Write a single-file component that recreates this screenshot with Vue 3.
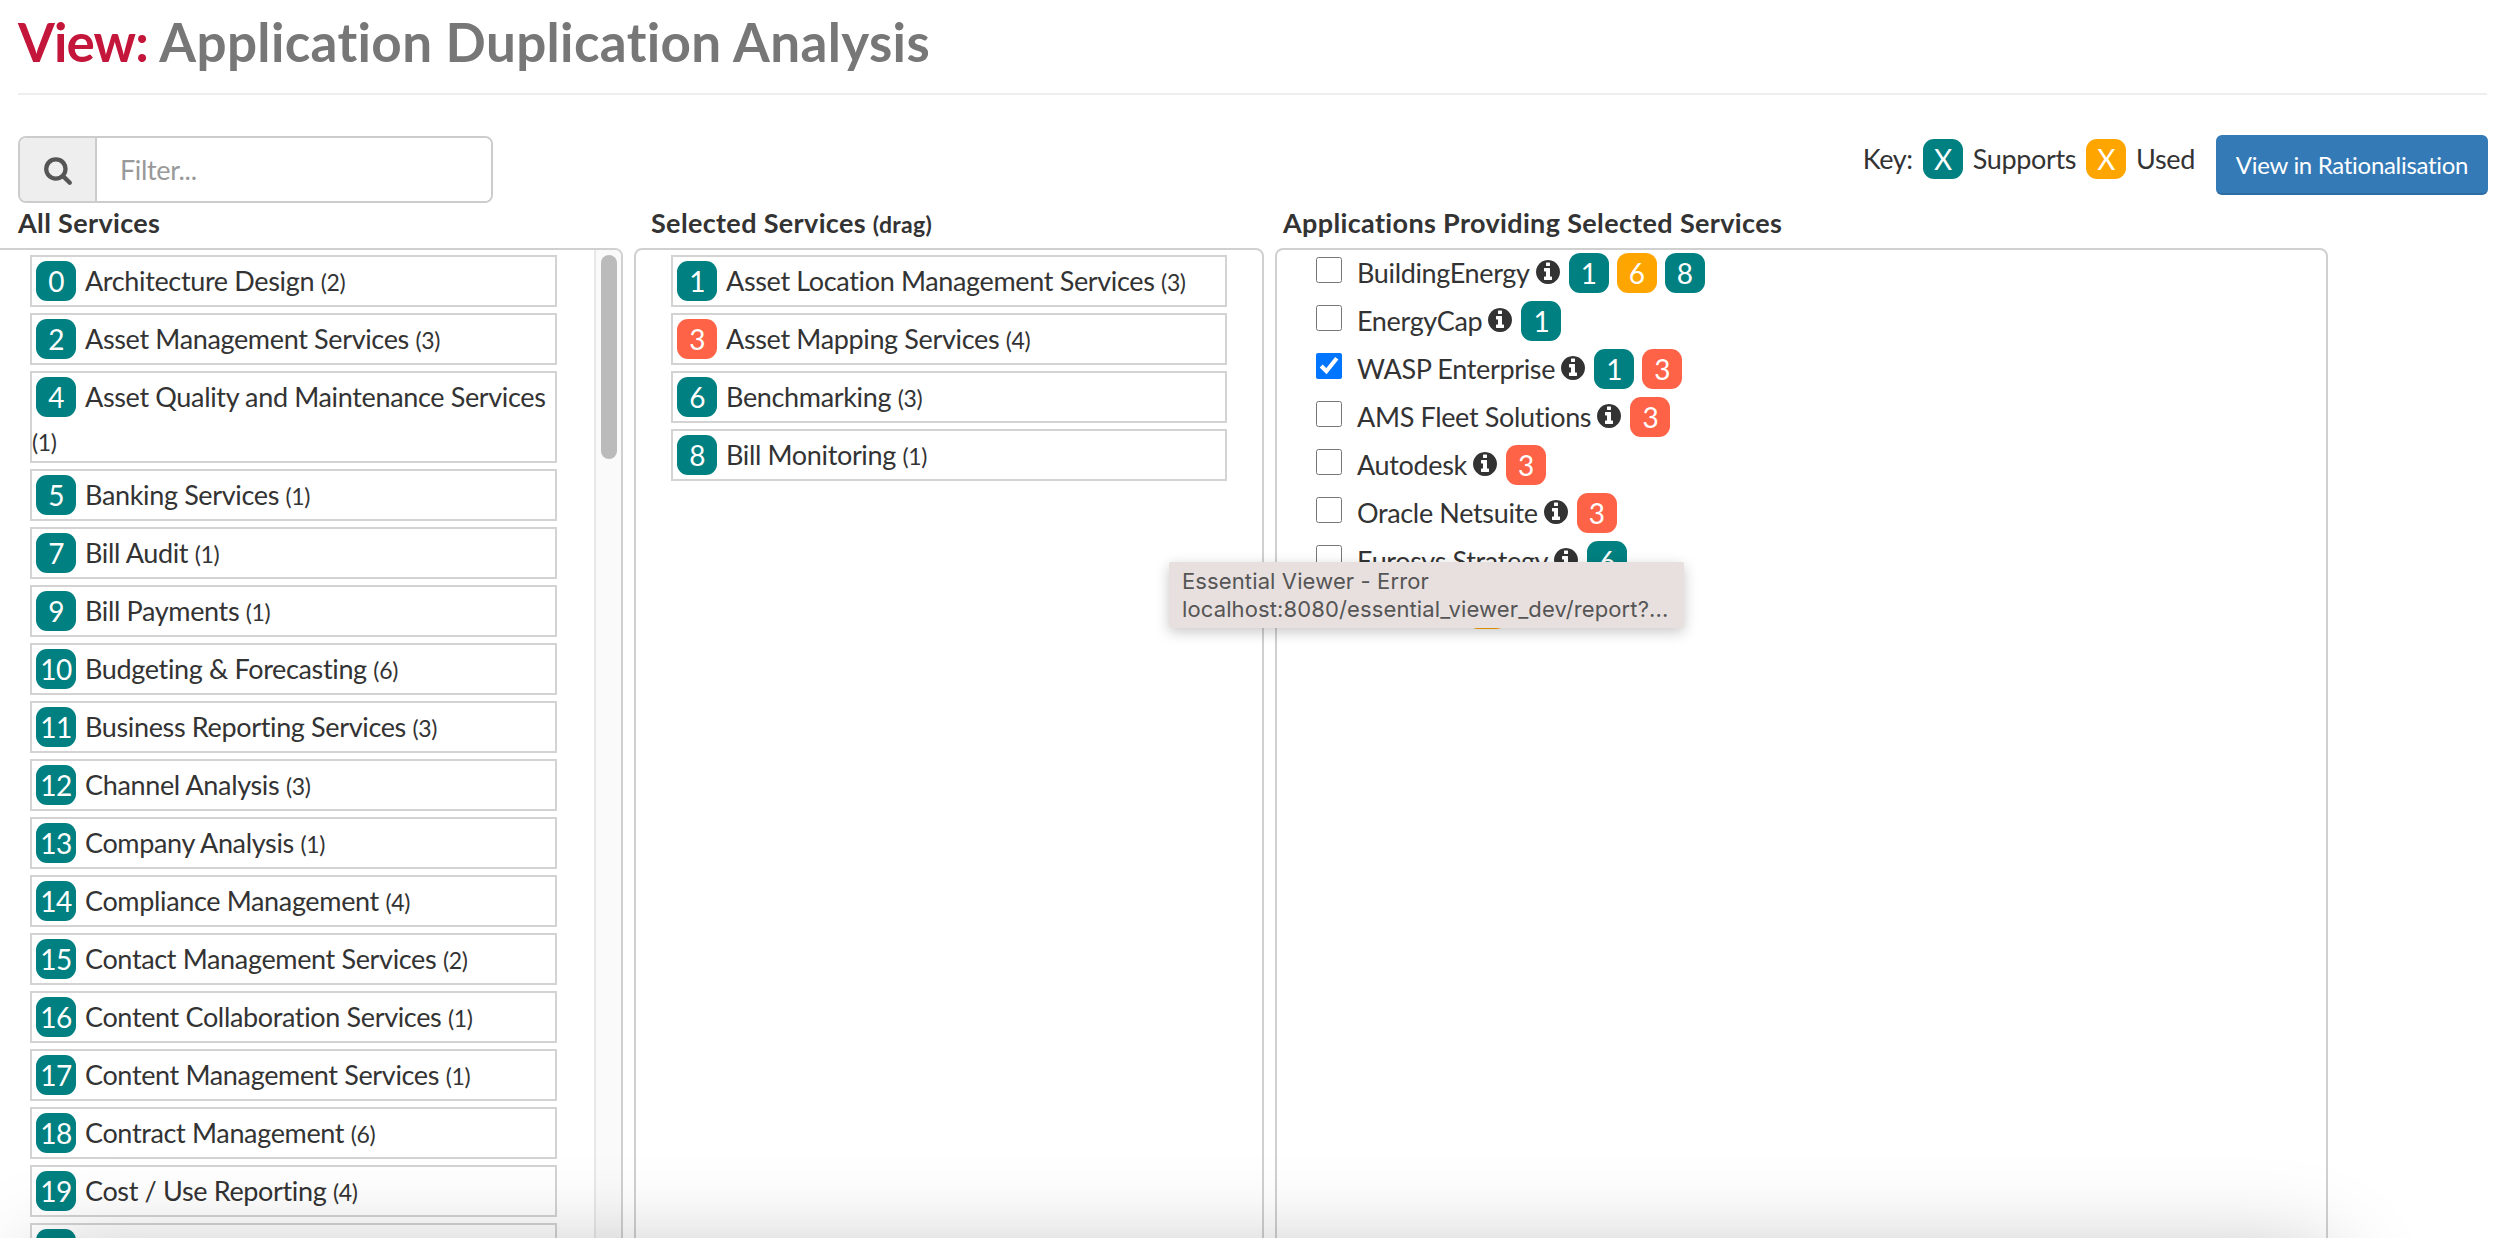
<script setup>
const services = [
  ['0', 'Architecture Design', 2], ['2', 'Asset Management Services', 3], ['4', 'Asset Quality and Maintenance Services', 1],
  ['5', 'Banking Services', 1], ['7', 'Bill Audit', 1], ['9', 'Bill Payments', 1], ['10', 'Budgeting & Forecasting', 6],
  ['11', 'Business Reporting Services', 3], ['12', 'Channel Analysis', 3], ['13', 'Company Analysis', 1],
  ['14', 'Compliance Management', 4], ['15', 'Contact Management Services', 2], ['16', 'Content Collaboration Services', 1],
  ['17', 'Content Management Services', 1], ['18', 'Contract Management', 6], ['19', 'Cost / Use Reporting', 4]
]
const selected = [
  ['1', 'Asset Location Management Services', 3, 'teal'], ['3', 'Asset Mapping Services', 4, 'tomato'],
  ['6', 'Benchmarking', 3, 'teal'], ['8', 'Bill Monitoring', 1, 'teal']
]
const apps = [
  { name: 'BuildingEnergy', badges: [['1', 'teal'], ['6', 'orange'], ['8', 'teal']] },
  { name: 'EnergyCap', badges: [['1', 'teal']] },
  { name: 'WASP Enterprise', checked: true, badges: [['1', 'teal'], ['3', 'tomato']] },
  { name: 'AMS Fleet Solutions', badges: [['3', 'tomato']] },
  { name: 'Autodesk', badges: [['3', 'tomato']] },
  { name: 'Oracle Netsuite', badges: [['3', 'tomato']] },
  { name: 'Eurosys Strategy', badges: [['6', 'teal']] },
  { name: '', badges: [['', 'orange']] }
]
const infoPath = 'M1152 1376v-160q0-14-9-23t-23-9h-96v-512q0-14-9-23t-23-9h-320q-14 0-23 9t-9 23v160q0 14 9 23t23 9h96v320h-96q-14 0-23 9t-9 23v160q0 14 9 23t23 9h448q14 0 23-9t9-23zm-128-896v-160q0-14-9-23t-23-9h-192q-14 0-23 9t-9 23v160q0 14 9 23t23 9h192q14 0 23-9t9-23zm640 416q0 209-103 385.5t-279.5 279.5-385.5 103-385.5-103-279.5-279.5-103-385.5 103-385.5 279.5-279.5 385.5-103 385.5 103 279.5 279.5 103 385.5z'
</script>

<template>
  <div class="page">
    <h1 class="title"><span class="view">View:</span> Application Duplication Analysis</h1>
    <div class="rule"></div>

    <div class="toolbar">
      <div class="filter">
        <span class="addon">
          <svg viewBox="0 0 1792 1792" width="30" height="30" fill="#555"><path d="M1216 832q0-185-131.5-316.5t-316.5-131.5-316.5 131.5-131.5 316.5 131.5 316.5 316.5 131.5 316.5-131.5 131.5-316.5zm512 832q0 52-38 90t-90 38q-54 0-90-38l-343-342q-179 124-399 124-143 0-273.5-55.5t-225-150-150-225-55.5-273.5 55.5-273.5 150-225 225-150 273.5-55.5 273.5 55.5 225 150 150 225 55.5 273.5q0 220-124 399l343 343q37 37 37 90z"/></svg>
        </span>
        <input class="filter-input" placeholder="Filter..." />
      </div>
      <div class="key">
        <span class="key-label">Key:</span>
        <span class="badge teal">X</span>
        <span class="key-label">Supports</span>
        <span class="badge orange">X</span>
        <span class="key-label">Used</span>
        <button class="btn">View in Rationalisation</button>
      </div>
    </div>

    <div class="columns">
      <section>
        <h2 class="head head-all">All Services</h2>
        <div class="panel panel-all">
          <div class="list list-all">
            <div v-for="s in services" :key="s[0]" class="row">
              <span class="badge teal inline">{{ s[0] }}</span>{{ s[1] }} <small>({{ s[2] }})</small>
            </div>
            <div class="row"><span class="badge teal inline"></span></div>
          </div>
          <div class="track"><div class="thumb"></div></div>
        </div>
      </section>

      <section>
        <h2 class="head head-sel">Selected Services <small>(drag)</small></h2>
        <div class="panel">
          <div class="list list-sel">
            <div v-for="s in selected" :key="s[0]" class="row">
              <span class="badge inline" :class="s[3]">{{ s[0] }}</span>{{ s[1] }} <small>({{ s[2] }})</small>
            </div>
          </div>
        </div>
      </section>

      <section>
        <h2 class="head head-app">Applications Providing Selected Services</h2>
        <div class="panel">
          <div class="apps">
            <div v-for="(a, idx) in apps" :key="idx" class="app">
              <input type="checkbox" class="check" :checked="a.checked" />
              <span class="app-name" :class="{ 'name-covered': !a.name }">{{ a.name }}</span>
              <svg class="info" viewBox="128 128 1536 1536" width="24" height="24" fill="#333"><path :d="infoPath"/></svg>
              <span class="badges">
                <span v-for="(b, i) in a.badges" :key="i" class="badge" :class="b[1]">{{ b[0] }}</span>
              </span>
            </div>
          </div>
        </div>
      </section>
    </div>

    <div class="tooltip">
      <div>Essential Viewer - Error</div>
      <div>localhost:8080/essential_viewer_dev/report?...</div>
    </div>
    <div class="window-shadow"></div>
  </div>
</template>

<style>
html, body { margin: 0; background: #fff; }
</style>

<style scoped>
.page {
  position: relative;
  width: 2516px;
  height: 1238px;
  overflow: hidden;
  background: #fff;
  font-family: Lato, "Noto Sans", sans-serif;
  font-size: 27px;
  letter-spacing: -0.35px;
  line-height: 40px;
  color: #333;
}
.title {
  margin: 0 0 0 18px;
  height: 93px;
  font-size: 53px;
  line-height: 84px;
  font-weight: 700;
  letter-spacing: 0.35px;
  color: #777;
}
.view { color: #c3163a; letter-spacing: -0.9px; }
.rule {
  height: 2px;
  margin: 0 29px 0 18px;
  background: #eee;
}
.toolbar {
  display: flex;
  justify-content: space-between;
  align-items: flex-start;
  height: 72px;
  margin: 41px 28px 0 18px;
}
.filter {
  display: flex;
  width: 475px;
  height: 67px;
  box-sizing: border-box;
  border: 2px solid #ccc;
  border-radius: 8px;
  overflow: hidden;
}
.addon {
  display: flex;
  align-items: center;
  justify-content: center;
  width: 75px;
  flex: none;
  background: #eee;
  border-right: 2px solid #ccc;
}
.filter-input {
  flex: 1;
  min-width: 0;
  border: 0;
  outline: 0;
  padding: 0 23px;
  font: inherit;
  letter-spacing: inherit;
  color: #333;
}
.filter-input::placeholder { color: #999; opacity: 1; }
.key {
  display: flex;
  align-items: flex-start;
  margin-top: -1px;
}
.key-label { margin: 4px 10px 0; }
.key .badge { margin-top: 4px; }
.btn {
  width: 272px;
  height: 60px;
  margin-left: 11px;
  padding: 0;
  border: 0;
  border-bottom: 2px solid #2e6da4;
  border-radius: 6px;
  background: #337ab7;
  color: #fff;
  font-family: inherit;
  font-size: 24px;
  letter-spacing: -0.3px;
}
.columns {
  display: grid;
  grid-template-columns: 623px 630px 1053px;
  column-gap: 11px;
  margin-top: -7px;
}
.head {
  margin: 0;
  height: 47px;
  font-size: 27px;
  font-weight: 700;
  line-height: 44px;
  letter-spacing: 0.35px;
  color: #333;
}
.head small { font-size: 23px; }
.head-all { margin-left: 18px; }
.head-sel { margin-left: 17px; }
.head-app { margin-left: 8px; }
.panel {
  display: flex;
  height: 1100px;
  box-sizing: border-box;
  border: 2px solid #d0d0d0;
  border-radius: 8px;
}
.panel-all { margin-left: -10px; }
.list { display: flex; flex-direction: column; gap: 6px; padding-top: 5px; }
.list-all { width: 527px; padding-left: 38px; flex: none; }
.list-sel { width: 556px; padding-left: 35px; }
.track {
  width: 27px;
  margin-left: 37px;
  flex: none;
  box-sizing: border-box;
  padding: 5px 3px 0 5px;
  background: #fafafa;
  border-left: 2px solid #e8e8e8;
  border-radius: 0 6px 0 0;
}
.thumb {
  width: 16px;
  height: 204px;
  border-radius: 8px;
  background: #bbb;
}
.row {
  box-sizing: border-box;
  min-height: 52px;
  padding: 4px 0 0;
  border: 2px solid #d3d3d3;
  flex: none;
}
.row small { font-size: 23px; line-height: 1; }
.badge {
  display: inline-block;
  flex: none;
  width: 40px;
  height: 40px;
  border-radius: 11px;
  color: #fff;
  text-align: center;
  line-height: 40px;
  font-size: 28px;
  letter-spacing: -0.6px;
}
.badge.inline {
  margin: 0 9px 4px 4px;
  vertical-align: top;
}
.teal { background: #008080; }
.orange { background: #ffa500; }
.tomato { background: #ff6347; }
.apps { display: flex; flex-direction: column; gap: 8px; padding: 3px 0 0 39px; }
.app { display: flex; align-items: center; height: 40px; }
.check {
  width: 26px;
  height: 26px;
  margin: -6px 15px 0 0;
  flex: none;
}
.name-covered { width: 71px; }
.info { margin: -2px 9px 0 6px; flex: none; }
.badges { display: flex; gap: 8px; }
.tooltip {
  position: absolute;
  left: 1169px;
  top: 562px;
  width: 515px;
  height: 66px;
  box-sizing: border-box;
  padding: 5px 13px;
  background: #e8e0df;
  border-radius: 2px;
  box-shadow: 0 4px 14px rgba(0, 0, 0, 0.22);
  font-family: Inter, Roboto, sans-serif;
  font-size: 22px;
  letter-spacing: 0.12px;
  line-height: 28px;
  color: #555;
  white-space: nowrap;
}
.window-shadow {
  position: absolute;
  left: 40px;
  right: 190px;
  top: 1262px;
  height: 100px;
  border-radius: 30px;
  box-shadow: 0 0 90px 10px rgba(0, 0, 0, 0.25);
  pointer-events: none;
}
</style>
